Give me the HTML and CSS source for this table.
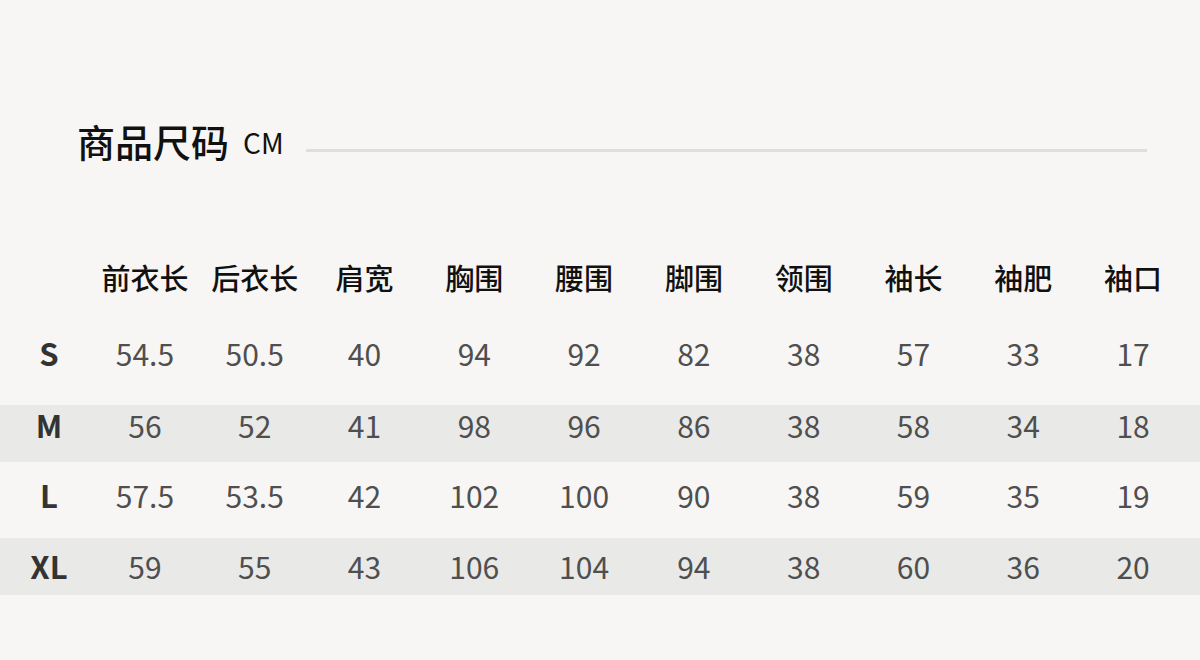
FILE: index.html
```html
<!DOCTYPE html>
<html lang="zh-CN">
<head>
<meta charset="utf-8">
<link rel="stylesheet" href="styles.css">
</head>
<body>
<div class="page">
  <div class="title">
    <h1 class="title-text">商品尺码</h1>
    <span class="unit">CM</span>
    <span class="rule"></span>
  </div>
  <div class="table">
    <div class="row head">
      <div class="cell size"></div>
      <div class="cell">前衣长</div><div class="cell">后衣长</div><div class="cell">肩宽</div><div class="cell">胸围</div><div class="cell">腰围</div><div class="cell">脚围</div><div class="cell">领围</div><div class="cell">袖长</div><div class="cell">袖肥</div><div class="cell">袖口</div>
    </div>
    <div class="row r-s">
      <div class="cell size">S</div>
      <div class="cell">54.5</div><div class="cell">50.5</div><div class="cell">40</div><div class="cell">94</div><div class="cell">92</div><div class="cell">82</div><div class="cell">38</div><div class="cell">57</div><div class="cell">33</div><div class="cell">17</div>
    </div>
    <div class="row r-m stripe">
      <div class="cell size">M</div>
      <div class="cell">56</div><div class="cell">52</div><div class="cell">41</div><div class="cell">98</div><div class="cell">96</div><div class="cell">86</div><div class="cell">38</div><div class="cell">58</div><div class="cell">34</div><div class="cell">18</div>
    </div>
    <div class="row r-l">
      <div class="cell size">L</div>
      <div class="cell">57.5</div><div class="cell">53.5</div><div class="cell">42</div><div class="cell">102</div><div class="cell">100</div><div class="cell">90</div><div class="cell">38</div><div class="cell">59</div><div class="cell">35</div><div class="cell">19</div>
    </div>
    <div class="row r-xl stripe">
      <div class="cell size">XL</div>
      <div class="cell">59</div><div class="cell">55</div><div class="cell">43</div><div class="cell">106</div><div class="cell">104</div><div class="cell">94</div><div class="cell">38</div><div class="cell">60</div><div class="cell">36</div><div class="cell">20</div>
    </div>
  </div>
</div>
</body>
</html>
```

FILE: styles.css
```css
html, body {
  margin: 0;
  padding: 0;
  background: #f7f6f4;
}
body {
  width: 1200px;
  height: 660px;
  overflow: hidden;
  font-family: "Noto Sans CJK SC", "Noto Sans", sans-serif;
}
.page {
  padding-top: 116px;
}
.title {
  display: flex;
  align-items: center;
  height: 50px;
  padding-left: 77px;
  padding-right: 53px;
}
.title-text {
  margin: 0;
  font-size: 38px;
  font-weight: 500;
  line-height: 50px;
  color: #111;
}
.unit {
  font-size: 28px;
  line-height: 50px;
  color: #111;
  margin-left: 14px;
  margin-top: 2px;
}
.rule {
  flex: 1;
  height: 3px;
  background: #dededc;
  margin-left: 22px;
  margin-top: 19px;
}
.table {
  margin-top: 81px;
}
.row {
  display: grid;
  grid-template-columns: 90px repeat(10, 109.8px);
  align-items: center;
}
.cell {
  text-align: center;
  font-size: 30px;
  line-height: 40px;
  color: #4f4f4f;
}
.cell.size {
  padding-left: 8px;
  font-weight: 600;
  font-size: 31px;
  color: #333;
}
.head {
  height: 60px;
}
.head .cell {
  color: #111;
  font-weight: 500;
  font-size: 29px;
}
.stripe {
  background: #e9e9e8;
}
.r-s {
  height: 98px;
  box-sizing: border-box;
  padding-bottom: 6px;
}
.r-m {
  height: 57px;
  box-sizing: border-box;
  padding-bottom: 17px;
}
.r-l {
  height: 76px;
  box-sizing: border-box;
  padding-bottom: 10px;
}
.r-xl {
  height: 57px;
  box-sizing: border-box;
  padding-bottom: 1px;
}
```
